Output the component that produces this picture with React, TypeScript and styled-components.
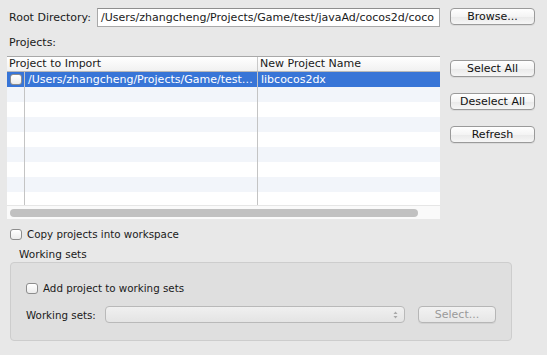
import React from 'react';
import styled, {createGlobalStyle} from 'styled-components';

const GlobalStyle = createGlobalStyle`
    html, body {
        margin: 0;
        padding: 0;
        background: #e8e8e8;
    }
`;

const FONT = `"DejaVu Sans", "Lucida Grande", sans-serif`;

type Project = {
    path: string;
    name: string;
};

const projects: Project[] = [
    {path: '/Users/zhangcheng/Projects/Game/test…', name: 'libcocos2dx'},
];

// full empty rows under the project rows, before the clipped last one
const EMPTY_ROWS = 7;

const Page = styled.div`
    width: 547px;
    height: 355px;
    box-sizing: border-box;
    padding: 8px 12px 0 7px;
    background: #e8e8e8;
    font-family: ${FONT};
    font-size: 11px;
    color: #1a1a1a;
    display: grid;
    grid-template-columns: 433px 85px;
    column-gap: 10px;
    align-content: start;
    overflow: hidden;
`;

const DirRow = styled.div`
    display: flex;
    align-items: center;
    height: 19px;
    padding-left: 2px;
    min-width: 0;
`;

const DirLabel = styled.span`
    width: 88px;
    flex-shrink: 0;
    white-space: nowrap;
`;

const PathInput = styled.div`
    flex: 1;
    min-width: 0;
    height: 19px;
    box-sizing: border-box;
    padding: 0 0 0 3px;
    background: #fff;
    border: 1px solid #a9a9a9;
    border-top-color: #8e8e8e;
    font-size: 11px;
    line-height: 17px;
    white-space: nowrap;
    overflow: hidden;
`;

const Button = styled.button<{$disabled?: boolean}>`
    width: 85px;
    height: 17px;
    padding: 0;
    box-sizing: border-box;
    border: 1px solid ${p => (p.$disabled ? '#b6b6b6' : '#9a9a9a')};
    border-radius: 4px;
    background: ${p =>
        p.$disabled
            ? 'linear-gradient(#f2f2f2, #e6e6e6)'
            : 'linear-gradient(#ffffff 0%, #f4f4f4 50%, #e9e9e9 51%, #f6f6f6 100%)'};
    box-shadow: 0 1px 0 rgba(0, 0, 0, 0.06);
    font-family: ${FONT};
    font-size: 11px;
    color: ${p => (p.$disabled ? '#9a9a9a' : '#111')};
    line-height: 15px;
    text-align: center;
    cursor: default;
`;

const LeftColumn = styled.div`
    display: flex;
    flex-direction: column;
`;

const ProjectsLabel = styled.div`
    height: 14px;
    line-height: 14px;
    margin: 9px 0 6px 2px;
`;

const Table = styled.div`
    border-top: 1px solid #a8a8a8;
    background: #fff;
    display: flex;
    flex-direction: column;
`;

const Columns = `
    display: grid;
    grid-template-columns: 18px 233px 1fr;
`;

const HeaderRow = styled.div`
    ${Columns}
    height: 14px;
    background: linear-gradient(#ffffff, #f1f1f1);
    border-bottom: 1px solid #b8b8b8;
`;

const HeaderCell = styled.div<{$span?: number}>`
    grid-column: span ${p => p.$span ?? 1};
    padding-left: 2px;
    line-height: 14px;
    white-space: nowrap;
    overflow: hidden;
    border-right: 1px solid #c9c9c9;
    &:last-child {
        border-right: none;
    }
`;

const Row = styled.div<{$selected?: boolean; $striped?: boolean}>`
    ${Columns}
    height: 15px;
    background: ${p => (p.$selected ? '#3875d7' : p.$striped ? '#f2f5fa' : '#ffffff')};
    color: ${p => (p.$selected ? '#ffffff' : '#1a1a1a')};
`;

const PartialRow = styled(Row)`
    height: 13px;
`;

const Cell = styled.div`
    border-right: 1px solid #c4c4c4;
    line-height: 15px;
    padding-left: 3px;
    white-space: nowrap;
    overflow: hidden;
    display: flex;
    align-items: center;
    &:last-child {
        border-right: none;
    }
`;

const Box = styled.span`
    display: inline-block;
    width: 12px;
    height: 11px;
    box-sizing: border-box;
    border: 1px solid #8d8d8d;
    border-radius: 3px;
    background: linear-gradient(#ffffff, #ececec);
    box-shadow: inset 0 1px 0 #fff;
    flex-shrink: 0;
`;

const ScrollTrack = styled.div`
    height: 13px;
    background: #fafafa;
    border-top: 1px solid #e6e6e6;
    display: flex;
    align-items: center;
    padding: 0 22px 0 3px;
`;

const ScrollThumb = styled.div`
    flex: 1;
    height: 8px;
    border-radius: 4px;
    background: #c1c1c1;
`;

const SideButtons = styled.div`
    display: flex;
    flex-direction: column;
    gap: 16px;
    padding-top: 33px;
`;

const Bottom = styled.div`
    grid-column: 1 / -1;
    display: flex;
    flex-direction: column;
    padding: 8px 0 0 3px;
`;

const CheckLine = styled.label`
    display: flex;
    align-items: center;
    gap: 5px;
    height: 14px;
    font-size: 10.3px;
`;

const GroupTitle = styled.div`
    margin: 6px 0 1px 9px;
    height: 14px;
    line-height: 14px;
    font-size: 10.5px;
`;

const GroupBox = styled.div`
    width: 502px;
    height: 79px;
    box-sizing: border-box;
    border: 1px solid #cdcdcd;
    border-radius: 4px;
    background: #dfdfdf;
    padding: 18px 0 0 15px;
    display: flex;
    flex-direction: column;
    gap: 11px;
`;

const SetsRow = styled.div`
    display: flex;
    align-items: center;
    height: 17px;
`;

const SetsLabel = styled.span`
    width: 79px;
    flex-shrink: 0;
    font-size: 10.3px;
    white-space: nowrap;
`;

const Combo = styled.div`
    width: 300px;
    height: 17px;
    box-sizing: border-box;
    border: 1px solid #b9b9b9;
    border-radius: 4px;
    background: linear-gradient(#f0f0f0, #e4e4e4);
    display: flex;
    align-items: center;
    justify-content: flex-end;
    padding-right: 6px;
`;

const SelectButton = styled(Button)`
    width: 78px;
    margin-left: 13px;
`;

const Updown = () => (
    <svg width="5" height="8" viewBox="0 0 5 8">
        <path d="M0.5 3 L2.5 0.5 L4.5 3 Z" fill="#a8a8a8" />
        <path d="M0.5 5 L2.5 7.5 L4.5 5 Z" fill="#a8a8a8" />
    </svg>
);

export default function App() {
    return (
        <>
            <GlobalStyle />
            <Page>
                <DirRow>
                    <DirLabel>Root Directory:</DirLabel>
                    <PathInput>/Users/zhangcheng/Projects/Game/test/javaAd/cocos2d/coco</PathInput>
                </DirRow>
                <Button>Browse...</Button>

                <LeftColumn>
                    <ProjectsLabel>Projects:</ProjectsLabel>
                    <Table>
                        <HeaderRow>
                            <HeaderCell $span={2}>Project to Import</HeaderCell>
                            <HeaderCell>New Project Name</HeaderCell>
                        </HeaderRow>
                        {projects.map(p => (
                            <Row key={p.path} $selected>
                                <Cell>
                                    <Box />
                                </Cell>
                                <Cell>{p.path}</Cell>
                                <Cell>{p.name}</Cell>
                            </Row>
                        ))}
                        {Array.from({length: EMPTY_ROWS}, (_, i) => (
                            <Row key={i} $striped={i % 2 === 0}>
                                <Cell />
                                <Cell />
                                <Cell />
                            </Row>
                        ))}
                        <PartialRow>
                            <Cell />
                            <Cell />
                            <Cell />
                        </PartialRow>
                        <ScrollTrack>
                            <ScrollThumb />
                        </ScrollTrack>
                    </Table>
                </LeftColumn>
                <SideButtons>
                    <Button>Select All</Button>
                    <Button>Deselect All</Button>
                    <Button>Refresh</Button>
                </SideButtons>

                <Bottom>
                    <CheckLine>
                        <Box />
                        Copy projects into workspace
                    </CheckLine>
                    <GroupTitle>Working sets</GroupTitle>
                    <GroupBox>
                        <CheckLine>
                            <Box />
                            Add project to working sets
                        </CheckLine>
                        <SetsRow>
                            <SetsLabel>Working sets:</SetsLabel>
                            <Combo>
                                <Updown />
                            </Combo>
                            <SelectButton $disabled>Select...</SelectButton>
                        </SetsRow>
                    </GroupBox>
                </Bottom>
            </Page>
        </>
    );
}
